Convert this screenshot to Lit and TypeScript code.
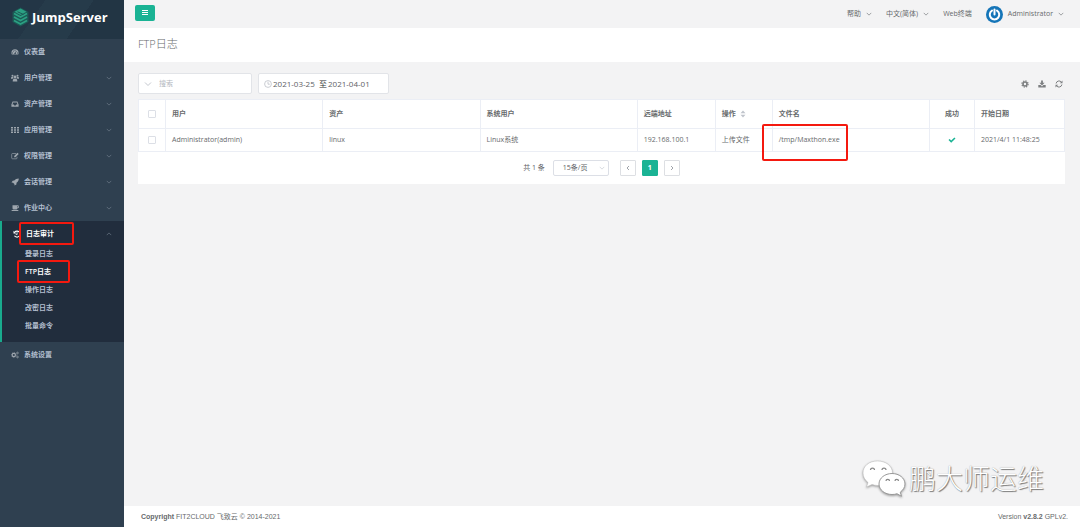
import { LitElement, html, css, svg, nothing } from "lit";
import { customElement, property, state } from "lit/decorators.js";

const glyphs: Record<string, unknown> = {
  dashboard: svg`<path fill-rule="evenodd" d="M1.6 13.2A7 7 0 0 1 0.9 9.8a7.1 7.1 0 0 1 14.2 0 7 7 0 0 1-.7 3.4zM2.2 9.2v1.6h1.6V9.2zM4 5.6v1.6h1.6V5.6zM7.2 4v1.6h1.6V4zM12.2 9.2v1.6h1.6V9.2zM10.2 5.8L8.3 9.3a1.5 1.5 0 1 0 1 .5l2-3.6z"/>`,
  users: svg`<circle cx="8" cy="6" r="2.9"/><path d="M3.4 14.8c0-3.4 1-5.4 2.4-5.4h4.4c1.4 0 2.4 2 2.4 5.4z"/><circle cx="3" cy="3.4" r="2"/><circle cx="13" cy="3.4" r="2"/><path d="M0 9.4C0 7 .4 5.8 1.4 5.8h2.8c0 1.6.4 2.4 1.2 3.2H3.4L3 9.4zM16 9.4c0-2.4-.4-3.6-1.4-3.6h-2.8c0 1.6-.4 2.4-1.2 3.2h2l.4.4z"/>`,
  inbox: svg`<path fill-rule="evenodd" d="M3.2 3h9.6L15.2 8.8V13.6H.8V8.8zM4.4 4.8L2.8 8.8h2.8l1 2h2.8l1-2h2.8l-1.6-4z"/>`,
  grid: svg`<path d="M0 2h4v3H0zM6 2h4v3H6zM12 2h4v3h-4zM0 6.5h4v3H0zM6 6.5h4v3H6zM12 6.5h4v3h-4zM0 11h4v3H0zM6 11h4v3H6zM12 11h4v3h-4z"/>`,
  edit: svg`<path d="M10 3H3Q1.4 3 1.4 4.6V12Q1.4 13.6 3 13.6H10.4Q12 13.6 12 12V9.6" fill="none" stroke="currentColor" stroke-width="1.3"/><path d="M12.8 1.4L15.4 4 9 10.4H6.4V7.8z"/>`,
  plane: svg`<path d="M15.5.8C11 .8 8.8 2.6 6.6 5.2L3.4 5.4 1 9.2l3 .2 2.8 2.8.2 3 3.8-2.4.2-3.2c2.8-2.2 4.5-4.4 4.5-8.8z"/>`,
  coffee: svg`<path fill-rule="evenodd" d="M3 2.5h10.2a2.9 2.9 0 0 1 0 5.9H12.8A2.6 2.6 0 0 1 10.4 11H5.6A2.6 2.6 0 0 1 3 8.4zM12.8 4v3h.4a1.5 1.5 0 0 0 0-3zM.6 12.2h14.8L14 13.9H2z"/>`,
  history: svg`<path d="M3.4 4.4A6 6 0 1 1 3 11.4" fill="none" stroke="currentColor" stroke-width="2.2"/><path d="M1 1.6V7h5.4zM7.2 4.6h1.7v4.9H5.4V7.9h1.8z"/>`,
  cogs: svg`<circle cx="5.6" cy="8" r="3.3" fill="none" stroke="currentColor" stroke-width="2.2"/><circle cx="5.6" cy="8" r="4.9" fill="none" stroke="currentColor" stroke-width="1.2" stroke-dasharray="2 1.85"/><circle cx="13" cy="4" r="1.7" fill="none" stroke="currentColor" stroke-width="1.4"/><circle cx="13" cy="12" r="1.7" fill="none" stroke="currentColor" stroke-width="1.4"/>`,
  gear: svg`<circle cx="8" cy="8" r="4" fill="none" stroke="currentColor" stroke-width="3.2"/><circle cx="8" cy="8" r="6.2" fill="none" stroke="currentColor" stroke-width="2.4" stroke-dasharray="2.6 2.27"/>`,
  download: svg`<path d="M6.2.8h3.6v4.8h3.4L8 10.8 2.8 5.6h3.4z"/><path d="M.6 10.2h4.6L8 13l2.8-2.8h4.6v4.6H.6z"/>`,
  refresh: svg`<path d="M2.2 7A6 6 0 0 1 12.7 4M13.8 9A6 6 0 0 1 3.3 12" fill="none" stroke="currentColor" stroke-width="2"/><path d="M15 1.2V6.6H9.6zM1 14.8V9.4h5.4z"/>`,
  check: svg`<path d="M1 8.2L3.2 6l3.2 3.2L12.8 3 15 5.2l-8.6 8.4z"/>`,
  bars: svg`<path d="M2 2h12v2H2zM2 6h12v2H2zM2 10h12v2H2z"/>`,
  down: svg`<path d="M2 5l6 6 6-6" fill="none" stroke="currentColor" stroke-width="1.6"/>`,
  up: svg`<path d="M2 11l6-6 6 6" fill="none" stroke="currentColor" stroke-width="1.6"/>`,
  left: svg`<path d="M10 4L6 8l4 4" fill="none" stroke="currentColor" stroke-width="2"/>`,
  right: svg`<path d="M6 4l4 4-4 4" fill="none" stroke="currentColor" stroke-width="2"/>`,
  clock: svg`<circle cx="8" cy="8" r="6.8" fill="none" stroke="currentColor" stroke-width="1.4"/><path d="M8 3.6V8.4H11.6" fill="none" stroke="currentColor" stroke-width="1.4"/>`,
  sort: svg`<path d="M8 1l5 5.4H3zM8 15l5-5.4H3z"/>`,
};

const icon = (name: string, cls = "") =>
  html`<svg class="icon ${cls}" viewBox="0 0 16 16" fill="currentColor" aria-hidden="true">${glyphs[name]}</svg>`;

const shared = css`
  :host, :host * , :host *::before, :host *::after { box-sizing: border-box; }
  .icon { width: 8px; height: 8px; flex: none; display: block; }
  .small { width: 6px; height: 6px; }
  a { color: inherit; text-decoration: none; }
  button, input, select { font: inherit; color: inherit; margin: 0; }
  button { cursor: pointer; }
`;

interface Entry { label: string; icon: string; children?: string[]; leaf?: boolean }

const entries: Entry[] = [
  { label: "仪表盘", icon: "dashboard", leaf: true },
  { label: "用户管理", icon: "users" },
  { label: "资产管理", icon: "inbox" },
  { label: "应用管理", icon: "grid" },
  { label: "权限管理", icon: "edit" },
  { label: "会话管理", icon: "plane" },
  { label: "作业中心", icon: "coffee" },
  { label: "日志审计", icon: "history", children: ["登录日志", "FTP日志", "操作日志", "改密日志", "批量命令"] },
  { label: "系统设置", icon: "cogs", leaf: true },
];

@customElement("side-nav")
export class SideNav extends LitElement {
  static styles = [shared, css`
    :host { display: block; background: #2f4050; color: #b3bfcf; font-weight: 600; }
    .brand {
      height: 39px; display: flex; align-items: center; gap: 3px; padding: 0 0 5px 12px;
      color: #fff; font-size: 13px; font-weight: 700;
      background: linear-gradient(125deg, #233646 0 30%, #263b4a 30% 62%, #223544 62%);
    }
    .mark { width: 17px; height: 20px; flex: none; }
    ul { list-style: none; margin: 0; padding: 0; }
    .row { display: flex; align-items: center; gap: 5px; height: 26px; padding: 0 12px 0 11px; }
    .row .icon:first-child { color: #9ea6ae; }
    .label { flex: 1; }
    .row .small { color: #7b8794; }
    .open { background: #212d3d; border-left: 2px solid #19aa8d; padding: 1px 0 7px; }
    .open .row { height: 23px; color: #fff; }
    .open .row .icon:first-child { color: #fff; }
    .sub { display: flex; align-items: center; height: 18px; padding-left: 23px; }
    .current { color: #fff; }
    .marked { position: relative; }
    .marked::after {
      content: ""; position: absolute; border: 2px solid #f4190f; border-radius: 2px; pointer-events: none;
    }
    .row.marked::after { left: 17px; top: 0; width: 55px; height: 23px; }
    .sub.marked::after { left: 15px; top: -3px; width: 53px; height: 23px; }
  `];

  render() {
    return html`
      <a class="brand" href="#">
        <svg class="mark" viewBox="0 0 34 40" aria-hidden="true">
          <path d="M17 1L33 10v20L17 39 1 30V10z" fill="#1c5955"/>
          <path d="M17 3L29 9.5 17 16 5 9.5z" fill="#2ba083"/>
          <path d="M4 13l13 7 13-7M4 20l13 7 13-7M4 27l13 7 13-7" fill="none" stroke="#2ba083" stroke-width="3.4"/>
          <path d="M11 9.5L23 15" stroke="#1c5955" stroke-width="2"/>
        </svg>
        <span>JumpServer</span>
      </a>
      <nav><ul>
        ${entries.map(e => html`
          <li class=${e.children ? "open" : ""}>
            <a class="row ${e.children ? "marked" : ""}" href="#">
              ${icon(e.icon)}<span class="label">${e.label}</span>
              ${e.leaf ? nothing : icon(e.children ? "up" : "down", "small")}
            </a>
            ${e.children ? html`<ul>${e.children.map((c, i) => html`
              <li><a class="sub ${i === 1 ? "current marked" : ""}" href="#">${c}</a></li>`)}</ul>` : nothing}
          </li>`)}
      </ul></nav>`;
  }
}

interface Log { user: string; asset: string; systemUser: string; remote: string; operate: string; file: string; date: string }

@customElement("log-table")
export class LogTable extends LitElement {
  @property({ attribute: false }) rows: Log[] = [];

  static styles = [shared, css`
    :host { display: block; background: #fff; }
    table { width: 100%; table-layout: fixed; border-collapse: collapse; border: 1px solid #ebeef5; color: #676a6c; }
    th, td { padding: 0 6px; text-align: left; border: 1px solid #ebeef5; white-space: nowrap; }
    th { height: 29px; font-weight: 600; }
    td { height: 23px; font-weight: 400; }
    .tick { width: 27px; }
    .remote { width: 78px; }
    .operate { width: 57px; }
    .success { width: 45px; }
    .date { width: 90px; }
    .center { text-align: center; }
    .center .icon { margin: 0 auto; color: #1ab394; }
    input { appearance: none; width: 8px; height: 8px; border: 1px solid #dcdfe6; border-radius: 1px; display: block; margin: 0 auto; background: #fff; }
    .sortable { display: flex; align-items: center; gap: 3px; }
    .sortable .icon { color: #c0c4cc; }
    .marked { position: relative; }
    .marked::after {
      content: ""; position: absolute; left: -11px; top: -5px; width: 86px; height: 37px;
      border: 2px solid #f4190f; border-radius: 2px; pointer-events: none;
    }
    .pager { display: flex; align-items: center; justify-content: center; gap: 6px; height: 32px; color: #606266; }
    .size { position: relative; display: flex; align-items: center; margin: 0 5px 0 2px; }
    select { appearance: none; width: 56px; height: 16px; border: 1px solid #dcdfe6; border-radius: 2px; background: #fff; padding: 0 9px; }
    .size .icon { position: absolute; right: 4px; color: #c0c4cc; pointer-events: none; }
    .pager button { width: 16px; height: 16px; padding: 0; border: 1px solid #dddfe3; border-radius: 1px; background: #fff; display: grid; place-items: center; color: #a0a4aa; }
    .pager .on { background: #1ab394; border-color: #1ab394; color: #fff; font-weight: 700; }
  `];

  render() {
    return html`
      <table>
        <thead><tr>
          <th class="tick"><input type="checkbox" aria-label="全选"></th>
          <th>用户</th><th>资产</th><th>系统用户</th>
          <th class="remote">远端地址</th>
          <th class="operate"><span class="sortable">操作 ${icon("sort")}</span></th>
          <th>文件名</th><th class="success center">成功</th><th class="date">开始日期</th>
        </tr></thead>
        <tbody>${this.rows.map(r => html`<tr>
          <td><input type="checkbox" aria-label=${r.user}></td>
          <td>${r.user}</td><td>${r.asset}</td><td>${r.systemUser}</td><td>${r.remote}</td>
          <td>${r.operate}</td><td class="marked">${r.file}</td>
          <td class="center">${icon("check")}</td><td>${r.date}</td>
        </tr>`)}</tbody>
      </table>
      <div class="pager">
        <span>共 ${this.rows.length} 条</span>
        <span class="size"><select aria-label="每页条数"><option>15条/页</option></select>${icon("down", "small")}</span>
        <button aria-label="上一页">${icon("left")}</button>
        <button class="on">1</button>
        <button aria-label="下一页">${icon("right")}</button>
      </div>`;
  }
}

@customElement("app-root")
export class AppRoot extends LitElement {
  @state() private logs: Log[] = [{
    user: "Administrator(admin)", asset: "linux", systemUser: "Linux系统", remote: "192.168.100.1",
    operate: "上传文件", file: "/tmp/Maxthon.exe", date: "2021/4/1 11:48:25",
  }];

  static styles = [shared, css`
    :host {
      display: grid; grid-template-columns: 124px minmax(0, 1fr); min-height: 100vh; position: relative;
      font: 7px/10px "Open Sans", "Noto Sans CJK SC", sans-serif; color: #676a6c; background: #f3f3f4;
    }
    .page { display: flex; flex-direction: column; }
    .top { height: 28px; display: flex; align-items: center; padding: 0 16px 0 11px; gap: 14px; }
    .toggle { width: 20px; height: 16px; margin: 0 auto 2px 0; padding: 0; border: 0; border-radius: 2px; background: #1ab394; color: #fff; display: grid; place-items: center; }
    .link { display: flex; align-items: center; gap: 5px; }
    .avatar { width: 17px; height: 17px; flex: none; }
    .title { margin: 0; height: 34px; padding: 0 14px 2px; display: flex; align-items: center; background: #fff; font-size: 11px; font-weight: 300; }
    main { flex: 1; padding: 11px 15px 0 14px; }
    .tools { display: flex; align-items: center; gap: 6px; margin-bottom: 5px; }
    .box { display: flex; align-items: center; height: 21px; border: 1px solid #e2e4e8; border-radius: 2px; background: #fff; padding: 0 5px; color: #606266; }
    .search { width: 114px; gap: 7px; }
    .box .icon { color: #b4b8c0; }
    .box input { border: 0; outline: 0; padding: 0; background: none; min-width: 0; }
    .search input { flex: 1; }
    .search input::placeholder { color: #b4b8c0; }
    .range { width: 131px; gap: 1px; font-size: 8px; }
    .range input { width: 45px; }
    .to { color: #303133; }
    .actions { display: flex; gap: 9px; margin: 0 2px 0 auto; }
    .actions button { border: 0; background: none; padding: 0; color: #7d7f81; }
    footer { height: 21px; background: #fff; display: flex; align-items: center; justify-content: space-between; padding: 0 12px 0 17px; }
    .sans { font-family: "Liberation Sans", "Noto Sans CJK SC", sans-serif; }
    .stamp {
      position: absolute; right: 36px; bottom: 28px; display: flex; align-items: center; gap: 3px; pointer-events: none;
      font-size: 27px; line-height: 40px; font-weight: 300; color: #fff; text-shadow: 1px 1px 1px #777, 0 0 1px #999;
    }
    .bubbles { width: 44px; height: 38px; filter: drop-shadow(0 1px 1px #999); }
  `];

  render() {
    return html`
      <side-nav></side-nav>
      <div class="page">
        <header class="top">
          <button class="toggle" aria-label="菜单">${icon("bars")}</button>
          <a class="link" href="#">帮助 ${icon("down", "small")}</a>
          <a class="link" href="#">中文(简体) ${icon("down", "small")}</a>
          <a class="link" href="#">Web终端</a>
          <a class="link" href="#">
            <svg class="avatar" viewBox="0 0 34 34" aria-hidden="true">
              <circle cx="17" cy="17" r="17" fill="#1575b8"/>
              <path d="M12 9.2A9.5 9.5 0 1 0 22 9.2" fill="none" stroke="#fff" stroke-width="4" stroke-linecap="round"/>
              <path d="M17 7v10" stroke="#fff" stroke-width="4" stroke-linecap="round"/>
            </svg>
            Administrator ${icon("down", "small")}</a>
        </header>
        <h1 class="title">FTP日志</h1>
        <main>
          <div class="tools">
            <label class="box search">${icon("down")}<input type="text" placeholder="搜索" aria-label="搜索"></label>
            <div class="box range">${icon("clock")}
              <input type="text" value="2021-03-25" aria-label="开始日期">
              <span class="to">至</span>
              <input type="text" value="2021-04-01" aria-label="结束日期">
            </div>
            <div class="actions">
              <button aria-label="设置">${icon("gear")}</button>
              <button aria-label="导出">${icon("download")}</button>
              <button aria-label="刷新">${icon("refresh")}</button>
            </div>
          </div>
          <log-table .rows=${this.logs}></log-table>
        </main>
        <footer class="sans">
          <span><b>Copyright</b> FIT2CLOUD 飞致云 © 2014-2021</span>
          <span>Version <b>v2.8.2</b> GPLv2.</span>
        </footer>
      </div>
      <div class="stamp">
        <svg class="bubbles" viewBox="0 0 88 76" aria-hidden="true">
          <path d="M31 2C14 2 2 12 2 26c0 8 4 14 10 19l-3 9 11-5c4 1 7 2 11 2 17 0 30-11 30-25S48 2 31 2z" fill="#fff" stroke="#bbb" stroke-width="1"/>
          <path d="M60 27c-14 0-26 9-26 21s12 21 26 21c4 0 7-.5 10-1.5l9 5-2.5-8C82 60 86 55 86 48c0-12-12-21-26-21z" fill="#fff" stroke="#999" stroke-width="2"/>
          <path d="M17 20a4 4 0 0 1 8 0M40 20a4 4 0 0 1 8 0M48 42a3 3 0 0 1 7 0M66 42a3 3 0 0 1 7 0" fill="none" stroke="#888" stroke-width="2.5"/>
        </svg>
        <span>鹏大师运维</span>
      </div>`;
  }
}
